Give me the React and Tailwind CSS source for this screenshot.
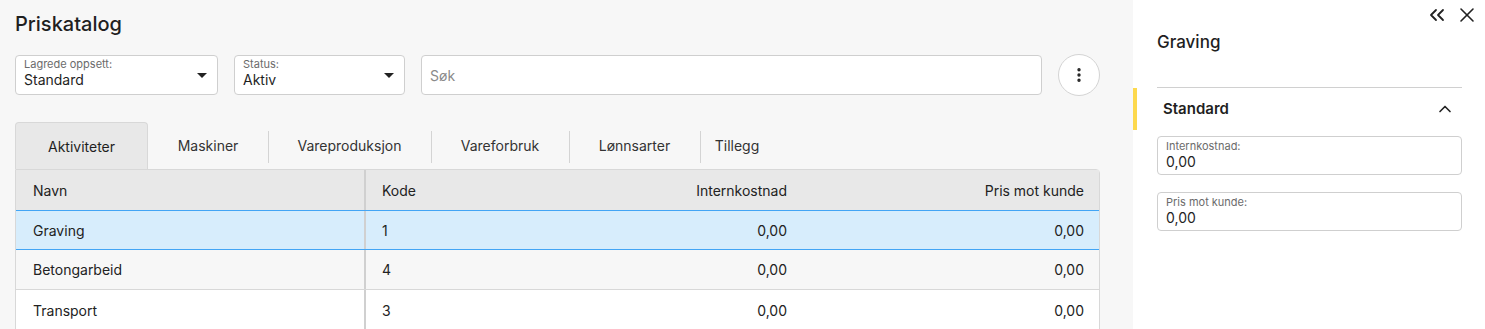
import { ChevronsLeft, X, ChevronUp, EllipsisVertical } from 'lucide-react';

const FONT = "font-['Inter','Liberation_Sans',sans-serif]";

const TABS = ['Aktiviteter', 'Maskiner', 'Vareproduksjon', 'Vareforbruk', 'Lønnsarter', 'Tillegg'];
const TAB_W = ['w-[133px]', 'w-[120px]', 'w-[163px]', 'w-[138px]', 'w-[131px]', 'w-[74px]'];

const ROWS = [
  { navn: 'Graving', kode: '1', intern: '0,00', pris: '0,00' },
  { navn: 'Betongarbeid', kode: '4', intern: '0,00', pris: '0,00' },
  { navn: 'Transport', kode: '3', intern: '0,00', pris: '0,00' },
];

/* ── Small pieces ──────────────────────────────────────────────────────────── */
const SelectBox = ({ label, value, className }) => (
  <div className={`h-10 bg-white border border-[#cfcfcf] rounded-[4px] flex items-center pl-2 pr-2.5 pb-[3px] ${className}`}>
    <div className="flex-1 min-w-0 leading-none">
      <p className="text-[11px] text-[#6b6b6b] leading-[13px]">{label}</p>
      <p className="text-[14px] text-[#1f1f1f] leading-[18px]">{value}</p>
    </div>
    <svg width="10" height="5" viewBox="0 0 10 5" className="mt-[3px]"><path d="M0 0h10L5 5z" fill="#222" /></svg>
  </div>
);

const Field = ({ label, value }) => (
  <div className="h-[39px] bg-white border border-[#cfcfcf] rounded-[4px] px-2 pt-[3px]">
    <p className="text-[11px] text-[#6b6b6b] leading-[13px]">{label}</p>
    <p className="text-[14px] text-[#1f1f1f] leading-[18px]">{value}</p>
  </div>
);

/* ── Main ──────────────────────────────────────────────────────────────────── */
export default function App() {
  return (
    <div className={`flex w-[1485px] h-[329px] overflow-hidden bg-[#f7f7f7] ${FONT}`}>
      <main className="w-[1133px] shrink-0 pl-[15px] pr-[33px] pt-[10px]">
        <h1 className="text-[20px] font-medium text-[#1f1f1f] leading-[28px]">Priskatalog</h1>

        {/* Filters */}
        <div className="flex items-center mt-[16px] h-[42px]">
          <SelectBox label="Lagrede oppsett:" value="Standard" className="w-[203px]" />
          <SelectBox label="Status:" value="Aktiv" className="w-[171px] ml-[16px]" />
          <div className="h-10 flex-1 ml-[16px] bg-white border border-[#cfcfcf] rounded-[4px] flex items-center px-2">
            <span className="text-[14px] text-[#8a8a8a]">Søk</span>
          </div>
          <button className="w-[42px] h-[42px] ml-[16px] rounded-full bg-white border border-[#d4d4d4] flex items-center justify-center">
            <EllipsisVertical className="w-[18px] h-[18px] text-[#222]" strokeWidth={2.5} />
          </button>
        </div>

        {/* Tabs */}
        <div className="flex mt-[26px] h-[47px]">
          {TABS.map((t, i) => (
            <div key={t} className={`${TAB_W[i]} relative flex items-center justify-center text-[14px] ${i === 0 ? 'bg-[#e8e8e8] border border-b-0 border-[#d8d8d8] rounded-t-[4px] text-[#1f1f1f]' : 'text-[#333]'}`}>
              {t}
              {i > 1 && <span className="absolute left-0 top-[9px] h-[32px] w-px bg-[#d4d4d4]" />}
            </div>
          ))}
        </div>

        {/* Table */}
        <div className="border border-[#d8d8d8] rounded-tr-[4px] bg-white text-[14px] text-[#222]">
          <div className="grid grid-cols-[350px_200px_237px_1fr] h-[40px] bg-[#e8e8e8] items-stretch">
            <div className="flex items-center pl-[17px] border-r-2 border-[#d0d0d0]">Navn</div>
            <div className="flex items-center pl-[16px]">Kode</div>
            <div className="flex items-center justify-end pr-[16px]">Internkostnad</div>
            <div className="flex items-center justify-end pr-[15px]">Pris mot kunde</div>
          </div>
          {ROWS.map((r, i) => (
            <div
              key={r.navn}
              className={`grid grid-cols-[350px_200px_237px_1fr] h-[40px] ${i === 0 ? 'bg-[#d7edfc] border-y border-[#42a5f5]' : i === 1 ? 'bg-[#f7f7f7] border-b border-[#d8d8d8]' : 'bg-white'}`}
            >
              <div className="flex items-center pl-[17px] border-r-2 border-[#d0d0d0]">{r.navn}</div>
              <div className="flex items-center pl-[16px]">{r.kode}</div>
              <div className="flex items-center justify-end pr-[16px]">{r.intern}</div>
              <div className="flex items-center justify-end pr-[15px]">{r.pris}</div>
            </div>
          ))}
        </div>
      </main>

      {/* Side panel */}
      <aside className="flex-1 bg-white relative">
        <div className="absolute top-[3px] right-[6px] flex items-center gap-[6px] text-[#222]">
          <ChevronsLeft className="w-[24px] h-[24px]" strokeWidth={1.8} />
          <X className="w-[24px] h-[24px]" strokeWidth={1.6} />
        </div>
        <div className="pl-[24px] pr-[23px] pt-[31px]">
          <h2 className="text-[17px] font-medium text-[#1f1f1f] leading-[22px]">Graving</h2>
          <div className="mt-[34px] border-t border-[#d0d0d0]" />
        </div>
        <div className="flex">
          <div className="w-[4px] h-[42px] bg-[#fdd94e]" />
          <div className="flex-1 flex items-center justify-between pl-[26px] pr-[30px] h-[42px]">
            <span className="text-[15px] font-semibold text-[#1f1f1f]">Standard</span>
            <ChevronUp className="w-[20px] h-[20px] text-[#222]" strokeWidth={2} />
          </div>
        </div>
        <div className="pl-[24px] pr-[23px] pt-[6px] flex flex-col gap-[17px]">
          <Field label="Internkostnad:" value="0,00" />
          <Field label="Pris mot kunde:" value="0,00" />
        </div>
      </aside>
    </div>
  );
}
